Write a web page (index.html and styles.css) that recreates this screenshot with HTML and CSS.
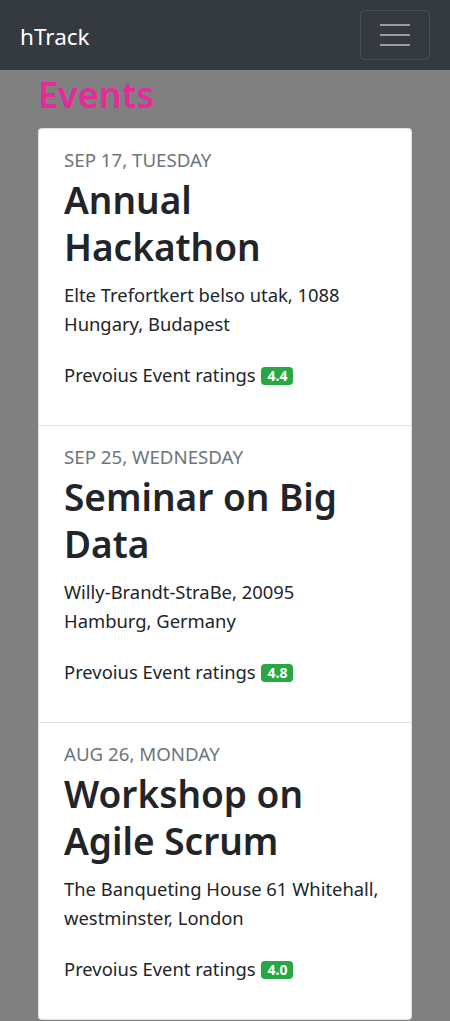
FILE: index.html
```html
<!DOCTYPE html>
<html lang="en">
<head>
<meta charset="utf-8">
<title>hTrack</title>
<link rel="stylesheet" href="styles.css">
</head>
<body>
<nav class="navbar">
  <a class="brand" href="#">hTrack</a>
  <button class="toggler" type="button" aria-label="Toggle navigation">
    <svg width="30" height="22" viewBox="0 0 30 22" aria-hidden="true">
      <path d="M0 1h30M0 11h30M0 21h30" stroke="rgba(255,255,255,0.5)" stroke-width="2"/>
    </svg>
  </button>
</nav>
<main class="container">
  <h1 class="page-title">Events</h1>
  <ul class="card">
    <li class="event">
      <div class="date">SEP 17, TUESDAY</div>
      <h2 class="title">Annual Hackathon</h2>
      <p class="address">Elte Trefortkert belso utak, 1088 Hungary, Budapest</p>
      <p class="rating">Prevoius Event ratings <span class="badge">4.4</span></p>
    </li>
    <li class="event">
      <div class="date">SEP 25, WEDNESDAY</div>
      <h2 class="title">Seminar on Big Data</h2>
      <p class="address">Willy-Brandt-StraBe, 20095 Hamburg, Germany</p>
      <p class="rating">Prevoius Event ratings <span class="badge">4.8</span></p>
    </li>
    <li class="event">
      <div class="date">AUG 26, MONDAY</div>
      <h2 class="title">Workshop on Agile Scrum</h2>
      <p class="address">The Banqueting House 61 Whitehall, westminster, London</p>
      <p class="rating">Prevoius Event ratings <span class="badge">4.0</span></p>
    </li>
  </ul>
</main>
</body>
</html>
```

FILE: styles.css
```css
* { box-sizing: border-box; }
html, body { margin: 0; padding: 0; }
body {
  background: #808080;
  font-family: "Noto Sans", "Open Sans", sans-serif;
  color: #212529;
}
.navbar {
  height: 70px;
  background: #343a40;
  display: flex;
  align-items: center;
  justify-content: space-between;
  padding: 0 20px;
}
.brand {
  color: #fff;
  text-decoration: none;
  font-size: 22.5px;
  line-height: 1;
  margin-top: 4px;
}
.toggler {
  width: 70px;
  height: 50px;
  margin-top: -1px;
  background: transparent;
  border: 1px solid rgba(255,255,255,0.1);
  border-radius: 5px;
  display: flex;
  align-items: center;
  justify-content: center;
  padding: 0;
}
.container {
  padding: 0 38px;
}
.page-title {
  margin: 0;
  height: 58px;
  font-size: 36px;
  font-weight: 600;
  line-height: 40px;
  padding-top: 5px;
  color: #e52a9a;
}
.card {
  list-style: none;
  margin: 0;
  padding: 0;
  background: #fff;
  border: 1px solid rgba(0,0,0,0.125);
  border-radius: 4px;
}
.event {
  height: 297px;
  padding: 17px 28px 0 25px;
  border-bottom: 1px solid rgba(0,0,0,0.125);
}
.event:last-child { border-bottom: 0; height: 296px; }
.date {
  font-size: 18.7px;
  line-height: 28px;
  color: #6c757d;
}
.title {
  margin: 2px 0 0;
  font-size: 37px;
  font-weight: 600;
  line-height: 47px;
}
.address {
  margin: 10px 0 0;
  font-size: 18.4px;
  line-height: 29px;
}
.rating {
  margin: 22px 0 0;
  font-size: 18.4px;
  line-height: 29px;
}
.badge {
  display: inline-block;
  margin-left: 1px;
  background: #28a745;
  color: #fff;
  font-size: 14px;
  font-weight: 700;
  line-height: 1;
  padding: 2px 6px;
  border-radius: 4px;
  vertical-align: 1px;
}
```
